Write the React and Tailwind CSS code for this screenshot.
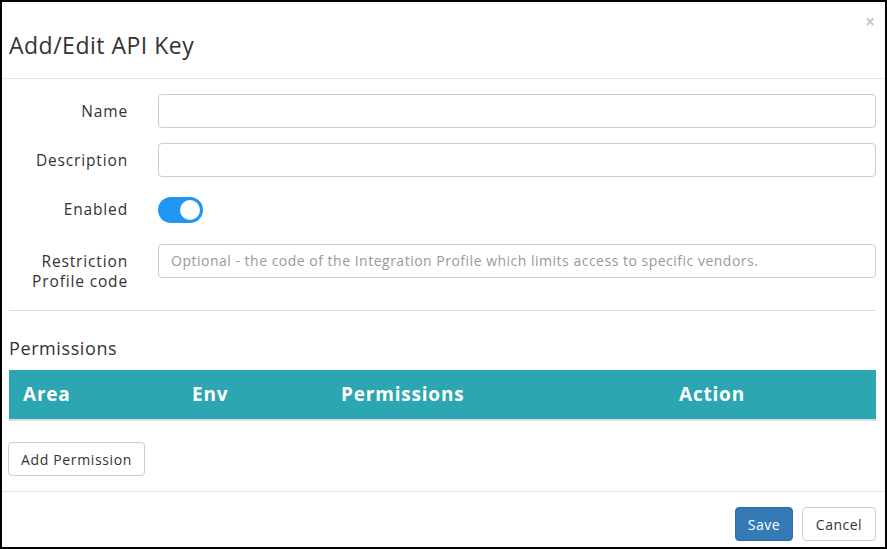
import React from "react";

const font = { fontFamily: '"Open Sans", "DejaVu Sans", sans-serif' };

function Row({ label, children, className = "" }) {
  return (
    <div className={`flex ${className}`}>
      <div className="w-[119px] shrink-0 pt-[7px] text-right text-[15.5px] leading-[20px] tracking-[0.85px] text-[#333]">
        {label}
      </div>
      <div className="ml-[30px] flex-1">{children}</div>
    </div>
  );
}

function Input({ placeholder }) {
  return (
    <div className="h-[34px] w-full rounded-[4px] border border-[#ccc] px-[12px] text-[14px] leading-[32px] tracking-[0.5px] text-[#999]">
      {placeholder}
    </div>
  );
}

export default function App() {
  return (
    <div
      className="flex h-[549px] w-[887px] flex-col border-2 border-black bg-white text-[#333]"
      style={font}
    >
      <div className="relative flex h-[77px] shrink-0 items-center border-b border-[#e5e5e5] pl-[7px]">
        <div className="mt-[10px] text-[23px] tracking-[0.5px] text-[#333]">Add/Edit API Key</div>
        <div className="absolute right-[10px] top-[10px] text-[17px] font-bold leading-[20px] text-[#c8c8c8]">
          ×
        </div>
      </div>
      <div className="flex flex-1 flex-col pl-[7px] pr-[9px]">
        <Row label="Name" className="mt-[15px]">
          <Input />
        </Row>
        <Row label="Description" className="mt-[15px]">
          <Input />
        </Row>
        <Row label="Enabled" className="mt-[15px] h-[37px]">
          <div className="mt-[5px] flex h-[26px] w-[45px] items-center justify-end rounded-full bg-[#2196f3] pr-[3px]">
            <div className="h-[20px] w-[20px] rounded-full bg-white" />
          </div>
        </Row>
        <Row
          label={
            <>
              Restriction
              <br />
              Profile code
            </>
          }
          className="mt-[15px]"
        >
          <Input placeholder="Optional - the code of the Integration Profile which limits access to specific vendors." />
        </Row>
        <div className="mt-[19px] border-t border-[#ddd]" />
        <div className="mt-[26px] text-[18px] leading-[22px] tracking-[0.6px] text-[#333]">Permissions</div>
        <div className="mt-[11px] grid h-[51px] grid-cols-[169px_149px_338px_1fr] items-center border-b-2 border-[#ddd] bg-[#2ca6b0] text-[19px] font-bold tracking-[0.8px] text-white">
          <div className="pl-[14px]">Area</div>
          <div className="pl-[14px]">Env</div>
          <div className="pl-[14px]">Permissions</div>
          <div className="pl-[14px]">Action</div>
        </div>
        <div className="mt-[21px]">
          <div className="ml-[-1px] inline-flex h-[34px] items-center rounded-[4px] border border-[#ccc] px-[12px] text-[14px] tracking-[0.65px] text-[#333]">
            Add Permission
          </div>
        </div>
      </div>
      <div className="flex h-[56px] shrink-0 items-start justify-end gap-[9px] border-t border-[#e5e5e5] pr-[9px] pt-[15px]">
        <div className="flex h-[34px] w-[58px] items-center justify-center rounded-[4px] border border-[#2e6da4] bg-[#337ab7] text-[14px] tracking-[0.5px] text-white">
          Save
        </div>
        <div className="flex h-[34px] w-[74px] items-center justify-center rounded-[4px] border border-[#ccc] bg-white text-[14px] tracking-[0.5px] text-[#333]">
          Cancel
        </div>
      </div>
    </div>
  );
}
